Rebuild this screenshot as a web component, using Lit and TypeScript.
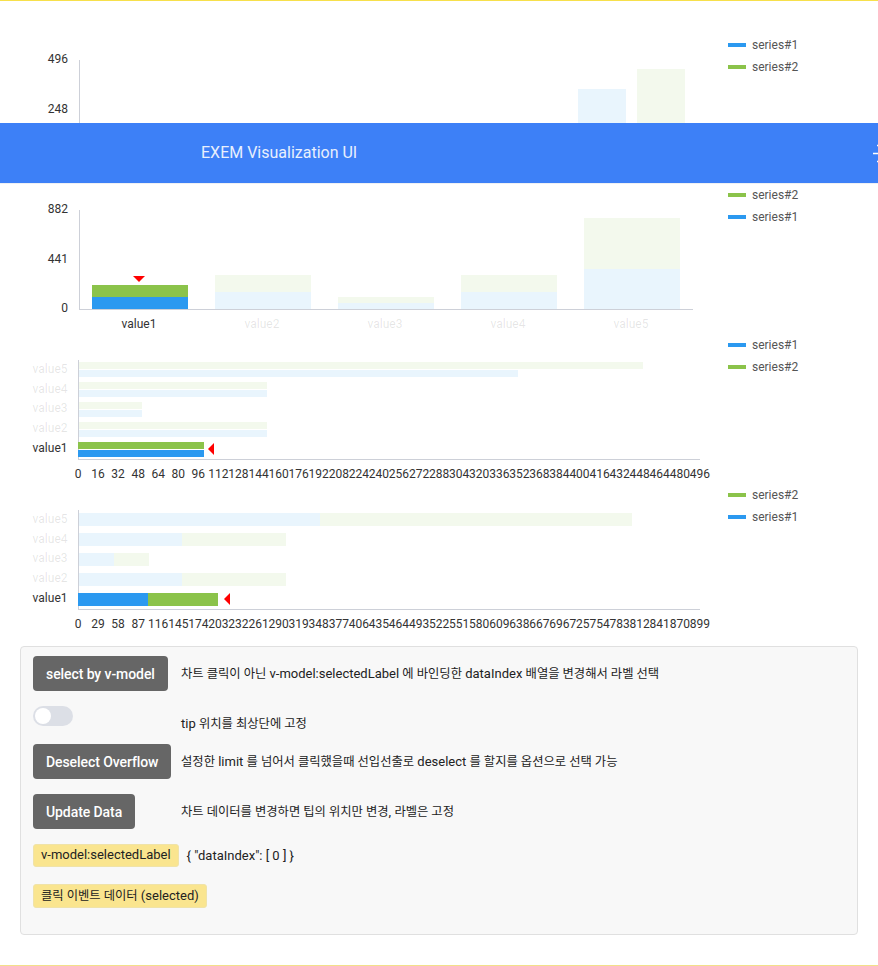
import { LitElement, html, svg, css } from "lit";
import { customElement, property } from "lit/decorators.js";

const BLUE = "#2b99f0";
const GREEN = "#8bc34a";
const LABELS = ["value1", "value2", "value3", "value4", "value5"];
const S1 = [100, 150, 50, 150, 350];
const S2 = [100, 150, 50, 150, 450];

// hangul runs are set a bit smaller than the latin text next to them
const ko = (text: string) =>
  text.split(/([\uac00-\ud7a3]+(?:\s+[\uac00-\ud7a3]+)*)/).map((part, i) =>
    i % 2 ? html`<span class="ko">${part}</span>` : part
  );

@customElement("bar-chart")
export class BarChart extends LitElement {
  @property({ type: Boolean }) horizontal = false;
  @property({ type: Boolean }) stacked = false;
  @property({ type: Number }) max = 496;
  @property({ type: Number }) step = 16;
  @property({ type: Number }) scale = 1;

  private text(x: number, y: number, label: string, anchor = "middle", cls = "tick") {
    return svg`<text x=${x} y=${y} text-anchor=${anchor} class=${cls}>${label}</text>`;
  }

  private bar(x: number, y: number, w: number, h: number, color: string, active: boolean) {
    return svg`<rect x=${x} y=${y} width=${w} height=${h} fill=${color} fill-opacity=${active ? 1 : 0.1}></rect>`;
  }

  private renderVertical() {
    const base = 129;
    const toPx = (v: number) =>
      this.stacked ? Math.ceil((v * 99.9) / this.max) : Math.floor((v * 100) / this.max);
    const parts = LABELS.map((label, i) => {
      const c = 140 + i * 123;
      const active = i === 0;
      const h1 = toPx(S1[i]);
      const h2 = toPx(S2[i]);
      const bars = this.stacked
        ? [
            this.bar(c - 48, base - h1, 96, h1, BLUE, active),
            this.bar(c - 48, base - h1 - h2, 96, h2, GREEN, active),
          ]
        : [
            this.bar(c - 54, base - h1, 48, h1, BLUE, active),
            this.bar(c + 5, base - h2, 48, h2, GREEN, active),
          ];
      return svg`${bars}${this.text(c - 1, 148, label, "middle", active ? "tick" : "tick faded")}`;
    });
    return svg`
      <rect x="79" y="30" width="1" height="100" class="axis"></rect>
      <rect x="79" y="129" width="614" height="1" class="axis"></rect>
      ${this.text(68, 33, String(this.max), "end")}
      ${this.text(68, 83, String(this.max / 2), "end")}
      ${this.text(68, 132, "0", "end")}
      ${parts}
      ${this.stacked ? svg`<polygon points="133,96 145,96 139,102" fill="#f00"></polygon>` : ""}
    `;
  }

  private renderHorizontal() {
    const x0 = 79;
    const ticks = [];
    for (let i = 0; i <= 31; i++) {
      ticks.push(this.text(78 + i * 20.06, 148, String(i * this.step)));
    }
    const parts = LABELS.map((label, i) => {
      const active = i === 0;
      const start = active ? 78 : x0;
      const pad = x0 - start;
      const w1 = Math.round(S1[i] * this.scale);
      const w2 = this.stacked ? Math.ceil(S2[i] * 0.693) : Math.round(S2[i] * this.scale);
      const labelY = [122, 102, 82, 63, 43][i];
      const rowY = 112 - i * 20;
      const bars = this.stacked
        ? [
            this.bar(start, rowY + 1, w1 + pad, 13, BLUE, active),
            this.bar(x0 + w1, rowY + 1, w2, 13, GREEN, active),
          ]
        : [
            this.bar(start, rowY, w2 + pad, 7, GREEN, active),
            this.bar(start, rowY + 8, w1 + pad, 7, BLUE, active),
          ];
      return svg`${bars}${this.text(67.5, labelY, label, "end", active ? "tick" : "tick faded")}`;
    });
    const tip = this.stacked ? 224 : 208;
    return svg`
      <rect x="78" y="30" width="1" height="100" class="axis"></rect>
      <rect x="78" y="129" width="622" height="1" class="axis"></rect>
      ${parts}
      <polygon points="${tip},119 ${tip + 6},113 ${tip + 6},125" fill="#f00"></polygon>
      ${ticks}
    `;
  }

  override render() {
    const items = [
      { name: "series#1", color: BLUE },
      { name: "series#2", color: GREEN },
    ];
    if (this.stacked) items.reverse();
    return html`
      <div class="chart">
        <svg width="728" height="150" viewBox="0 0 728 150">
          ${this.horizontal ? this.renderHorizontal() : this.renderVertical()}
        </svg>
        <div class="legend">
          ${items.map(
            (item) => html`
              <div class="legend-item">
                <span class="swatch" style="background:${item.color}"></span>
                <span>${item.name}</span>
              </div>
            `
          )}
        </div>
      </div>
    `;
  }

  static styles = css`
    :host {
      display: block;
    }

    .chart {
      display: flex;
      height: 150px;
    }

    svg {
      display: block;
      flex: none;
    }

    .axis {
      fill: #cdd0d8;
    }

    .tick {
      font: 12px Roboto, sans-serif;
      fill: #333;
    }

    .tick.faded {
      fill-opacity: 0.12;
    }

    .legend {
      padding-top: 4px;
      font: 12px Roboto, sans-serif;
      color: #555;
    }

    .legend-item {
      display: flex;
      align-items: center;
      gap: 6px;
      height: 22px;
    }

    .swatch {
      width: 18px;
      height: 4px;
    }
  `;
}

@customElement("app-root")
export class AppRoot extends LitElement {
  override render() {
    return html`
      <div class="page">
        <div class="charts">
          <bar-chart max="496"></bar-chart>
          <bar-chart stacked max="882"></bar-chart>
          <bar-chart horizontal max="496" step="16" scale="1.254"></bar-chart>
          <bar-chart horizontal stacked max="899" step="29" scale="0.69"></bar-chart>
        </div>

        <section class="panel">
          <div class="row">
            <div class="control"><button>select by v-model</button></div>
            <p>${ko("차트 클릭이 아닌 v-model:selectedLabel 에 바인딩한 dataIndex 배열을 변경해서 라벨 선택")}</p>
          </div>
          <div class="row toggle-row">
            <div class="control"><span class="switch"><span class="knob"></span></span></div>
            <p>${ko("tip 위치를 최상단에 고정")}</p>
          </div>
          <div class="row">
            <div class="control"><button>Deselect Overflow</button></div>
            <p>${ko("설정한 limit 를 넘어서 클릭했을때 선입선출로 deselect 를 할지를 옵션으로 선택 가능")}</p>
          </div>
          <div class="row">
            <div class="control"><button>Update Data</button></div>
            <p>${ko("차트 데이터를 변경하면 팁의 위치만 변경, 라벨은 고정")}</p>
          </div>
          <div class="tag-row">
            <span class="tag">v-model:selectedLabel</span>
            <span class="value">{ "dataIndex": [ 0 ] }</span>
          </div>
          <div class="tag-row second">
            <span class="tag">${ko("클릭 이벤트 데이터")} (selected)</span>
          </div>
        </section>

        <header class="bar">
          <span class="title">EXEM Visualization UI</span>
          <svg class="menu" width="16" height="24" viewBox="0 0 16 24">
            <path d="M4 1.5H16M0 9.5H16M4 17.5H16" stroke="#fff" stroke-width="1.5" fill="none"></path>
          </svg>
        </header>
      </div>
    `;
  }

  static styles = css`
    :host {
      display: block;
    }

    .page {
      position: relative;
      box-sizing: border-box;
      height: 966px;
      overflow: hidden;
      background: #fff;
      border-top: 1px solid #f7e04b;
      border-bottom: 1px solid #f2e08a;
      font-family: Roboto, "Noto Sans CJK KR", sans-serif;
    }

    .charts {
      padding-top: 29px;
    }

    .bar {
      position: absolute;
      top: 122px;
      left: 0;
      right: 0;
      box-sizing: border-box;
      height: 61px;
      display: flex;
      align-items: center;
      padding: 0 0 2px 201px;
      background: #3d80f7;
      border-bottom: 1px solid #eef0f4;
      color: #e8effd;
      font-size: 16px;
      overflow: hidden;
    }

    .menu {
      position: absolute;
      left: 873px;
      top: 21px;
    }

    .panel {
      box-sizing: border-box;
      height: 289px;
      margin: 16px 20px 0;
      padding: 9px 12px 0;
      background: #f8f8f8;
      border: 1px solid #e0e0e0;
      border-radius: 4px;
      font-size: 13px;
      color: #222;
    }

    .ko {
      font-size: 12.3px;
    }

    .row {
      display: flex;
      align-items: center;
      margin-bottom: 15px;
    }

    .toggle-row {
      align-items: flex-start;
      height: 23px;
    }

    .toggle-row p {
      margin-top: 10px;
    }

    .control {
      flex: none;
      width: 148px;
    }

    p {
      margin: 0;
      line-height: 16px;
    }

    button {
      display: block;
      height: 35px;
      padding: 0 13px;
      border: 0;
      border-radius: 4px;
      background: #666;
      color: #fff;
      font: 500 14px Roboto, "Noto Sans CJK KR", sans-serif;
      letter-spacing: -0.08px;
    }

    .switch {
      display: block;
      position: relative;
      width: 40px;
      height: 20px;
      border-radius: 10px;
      background: #dcdfe6;
    }

    .knob {
      position: absolute;
      left: 2px;
      top: 2px;
      width: 16px;
      height: 16px;
      border-radius: 50%;
      background: #fff;
    }

    .tag-row {
      display: flex;
      align-items: center;
      gap: 8px;
      height: 23px;
    }

    .tag-row.second {
      height: 24px;
      margin-top: 17px;
    }

    .tag {
      display: block;
      box-sizing: border-box;
      height: 100%;
      padding: 0 7px;
      line-height: 20px;
      background: #fae58f;
      border: 1px solid #f0e3a8;
      border-radius: 3px;
    }

    .second .tag {
      line-height: 22px;
    }
  `;
}
